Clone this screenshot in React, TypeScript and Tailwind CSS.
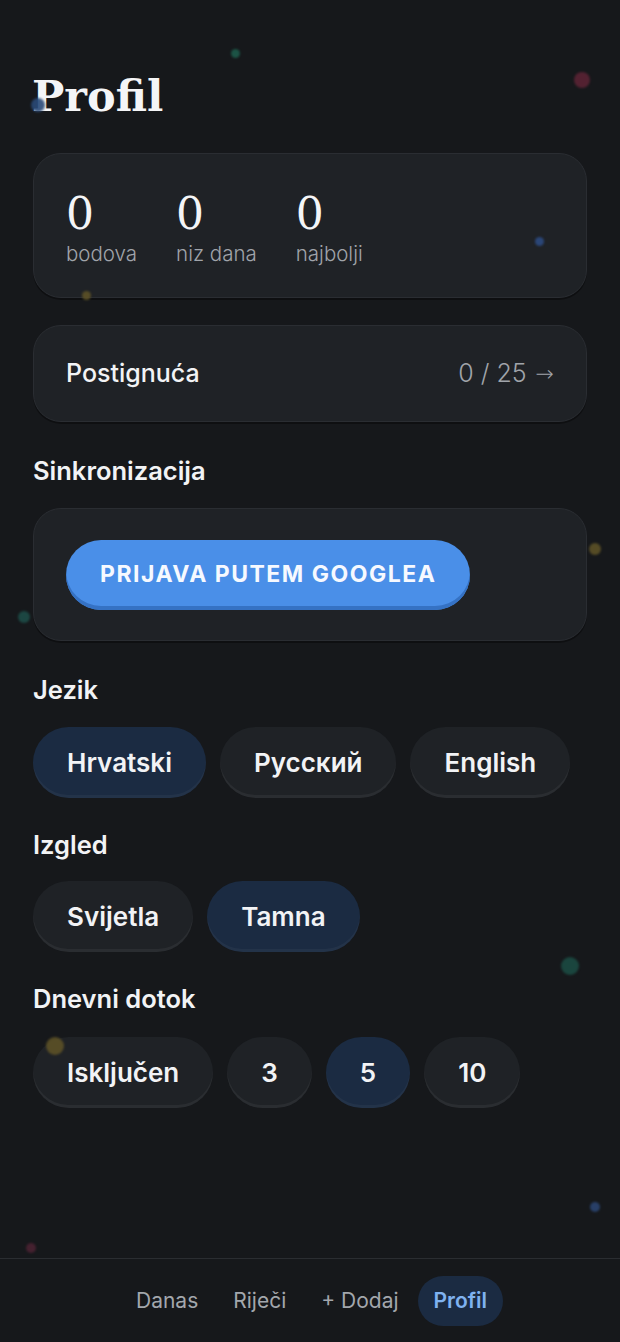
import React from "react";

const dots = [
  { x: 235, y: 53, s: 9, c: "bg-[#1d5a4a]" },
  { x: 582, y: 80, s: 16, c: "bg-[#5a2334]" },
  { x: 38, y: 105, s: 14, c: "bg-[#2a4a78]" },
  { x: 539, y: 241, s: 9, c: "bg-[#2c4a80]" },
  { x: 86, y: 295, s: 9, c: "bg-[#5c5127]" },
  { x: 595, y: 549, s: 12, c: "bg-[#5c5127]" },
  { x: 24, y: 617, s: 12, c: "bg-[#1d4c47]" },
  { x: 570, y: 966, s: 18, c: "bg-[#1b4a42]" },
  { x: 55, y: 1046, s: 18, c: "bg-[#5c5127]" },
  { x: 595, y: 1207, s: 10, c: "bg-[#2a4470]" },
  { x: 31, y: 1248, s: 10, c: "bg-[#4a2232]" },
];

function Pill({ label, active }: { label: string; active?: boolean }) {
  return (
    <div
      className={
        "h-[71px] px-[34px] rounded-full flex items-center justify-center text-[26px] font-semibold text-[#f2f3f5] " +
        (active
          ? "bg-[#1b2b42] shadow-[inset_0_-3px_0_rgba(255,255,255,0.04)]"
          : "bg-[#1f2226] shadow-[inset_0_-3px_0_rgba(255,255,255,0.05)]")
      }
    >
      {label}
    </div>
  );
}

function Heading({ children, className }: { children: React.ReactNode; className?: string }) {
  return (
    <div className={"text-[25.5px] font-semibold text-[#f2f3f5] leading-[30px] " + (className || "")}>
      {children}
    </div>
  );
}

export default function App() {
  return (
    <div
      className="relative h-[1342px] w-full overflow-hidden bg-[#16181b] flex flex-col"
      style={{ fontFamily: "Inter, 'Noto Sans', sans-serif" }}
    >
      <div className="relative flex-1 px-[33px] pt-[66px]">
        <h1
          className="text-[43px] font-bold text-[#f4f5f7] leading-[60px] -ml-[1px]"
          style={{ fontFamily: "'DejaVu Serif', serif" }}
        >
          Profil
        </h1>

        <div className="mt-[27px] h-[145px] rounded-[28px] bg-[#1f2226] border border-[#2a2d32] shadow-[0_2px_0_rgba(0,0,0,0.35)] px-[32px] pt-[38px] flex gap-[39px]">
          {[
            ["0", "bodova"],
            ["0", "niz dana"],
            ["0", "najbolji"],
          ].map(([n, l], i) => (
            <div key={i} className="flex flex-col">
              <div
                className="text-[44px] leading-[44px] text-[#f4f5f7]"
                style={{ fontFamily: "'DejaVu Serif', serif" }}
              >
                {n}
              </div>
              <div className="mt-[4px] text-[20.5px] font-light text-[#a0a4aa] leading-[28px]">{l}</div>
            </div>
          ))}
        </div>

        <div className="mt-[27px] h-[97px] rounded-[28px] bg-[#1f2226] border border-[#2a2d32] shadow-[0_2px_0_rgba(0,0,0,0.35)] px-[32px] flex items-center justify-between">
          <div className="text-[25px] font-medium text-[#f2f3f5]">Postignuća</div>
          <div className="text-[25px] font-light text-[#a0a4aa] flex items-center gap-[9px]">
            <span>0 / 25</span>
            <span className="text-[22px]" style={{ fontFamily: "'DejaVu Sans', sans-serif" }}>→</span>
          </div>
        </div>

        <Heading className="mt-[34px]">Sinkronizacija</Heading>

        <div className="mt-[22px] h-[133px] rounded-[28px] bg-[#1f2226] border border-[#2a2d32] shadow-[0_2px_0_rgba(0,0,0,0.35)] px-[32px] flex items-center">
          <div className="h-[70px] px-[34px] rounded-full bg-[#4a8fe8] shadow-[inset_0_-4px_0_#3572c4] flex items-center text-[23px] font-bold tracking-[1.5px] text-[#f6f9ff]">
            PRIJAVA PUTEM GOOGLEA
          </div>
        </div>

        <Heading className="mt-[34px]">Jezik</Heading>
        <div className="mt-[22px] flex gap-[14px]">
          <Pill label="Hrvatski" active />
          <Pill label="Русский" />
          <Pill label="English" />
        </div>

        <Heading className="mt-[32px]">Izgled</Heading>
        <div className="mt-[21px] flex gap-[14px]">
          <Pill label="Svijetla" />
          <Pill label="Tamna" active />
        </div>

        <Heading className="mt-[32px]">Dnevni dotok</Heading>
        <div className="mt-[23px] flex gap-[14px]">
          <Pill label="Isključen" />
          <Pill label="3" />
          <Pill label="5" active />
          <Pill label="10" />
        </div>
      </div>

      <div className="relative h-[84px] border-t border-[#2a2d31] bg-[#16181b] flex items-center justify-center gap-[3px] pl-[3px]">
        <div className="px-[16px] h-[50px] flex items-center text-[21px] text-[#a3a7ad]">Danas</div>
        <div className="px-[16px] h-[50px] flex items-center text-[21px] text-[#a3a7ad]">Riječi</div>
        <div className="px-[16px] h-[50px] flex items-center text-[21px] text-[#a3a7ad]">+ Dodaj</div>
        <div className="px-[16px] h-[50px] rounded-full bg-[#1b2b42] flex items-center text-[21px] font-semibold text-[#7fb2f0]">
          Profil
        </div>
      </div>

      {dots.map((d, i) => (
        <div
          key={i}
          className={"absolute z-10 rounded-full blur-[1px] pointer-events-none opacity-90 " + d.c}
          style={{ left: d.x - d.s / 2, top: d.y - d.s / 2, width: d.s, height: d.s }}
        />
      ))}
    </div>
  );
}
